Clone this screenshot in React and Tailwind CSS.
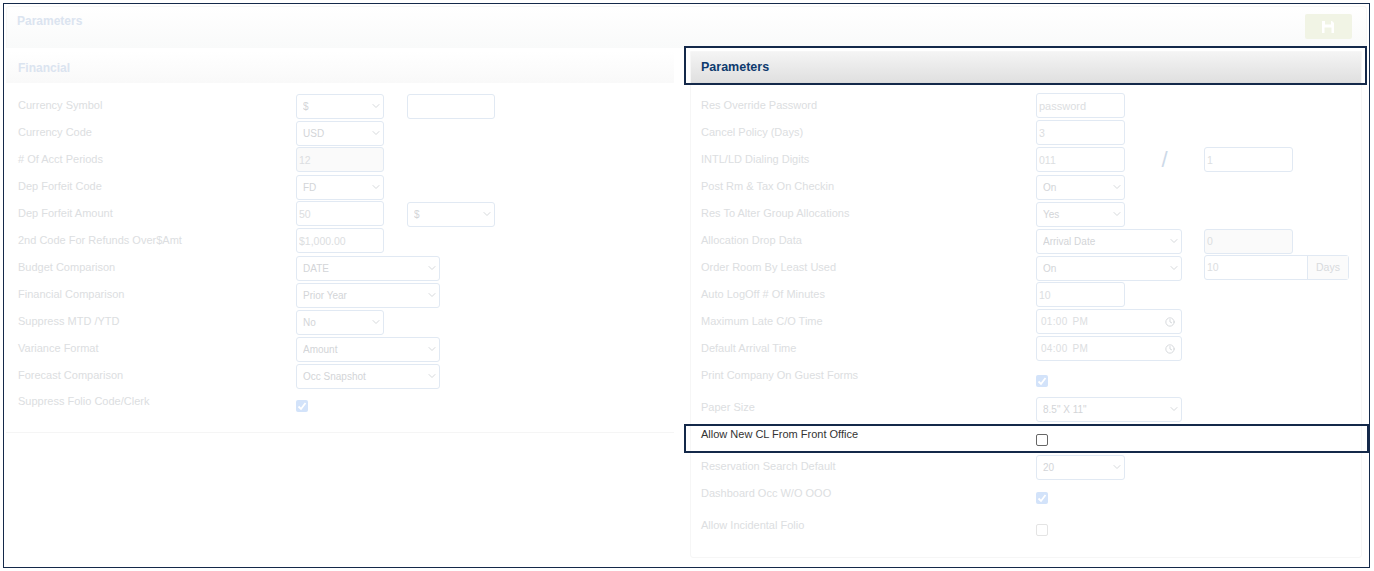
import React from 'react';
import { ChevronDown, Clock } from 'lucide-react';

const FONT = "font-['Liberation_Sans',Arial,sans-serif]";

function SelectBox({ value, width = 'w-[88px]' }) {
  return (
    <div className={`relative h-[25px] ${width}`}>
      <select
        defaultValue={value}
        className="h-full w-full appearance-none rounded-[3px] border border-[#e1e9f3] bg-white pl-[6px] text-[10px] text-[#d3d5d8] outline-none"
      >
        <option>{value}</option>
      </select>
      <ChevronDown className="pointer-events-none absolute right-[2px] top-[7px] h-[12px] w-[12px] text-[#cfd2d6]" strokeWidth={1.75} />
    </div>
  );
}

function TextBox({ value, width = 'w-[88px]', muted, placeholder }) {
  return (
    <input
      readOnly
      value={value || ''}
      placeholder={placeholder}
      className={`h-[25px] rounded-[3px] border border-[#e1e9f3] px-[2px] text-[10.5px] text-[#dcdee1] outline-none placeholder:text-[11px] placeholder:text-[#dcdee1] ${width} ${muted ? 'bg-[#fafafa]' : 'bg-white'}`}
    />
  );
}

function TimeBox({ value }) {
  return (
    <div className="flex h-[25px] w-[146px] items-center justify-between rounded-[3px] border border-[#e1e9f3] bg-white pl-[4px] pr-[6px] text-[10px] tracking-[0.3px] text-[#dcdee1] [word-spacing:2px]">
      <span>{value}</span>
      <Clock className="h-[10px] w-[10px] text-[#cfd2d6]" strokeWidth={2} />
    </div>
  );
}

function Check({ checked, faint }) {
  if (checked) {
    return (
      <span className="flex h-[12px] w-[12px] items-center justify-center rounded-[2px] bg-[#d3e3fa]">
        <svg viewBox="0 0 12 12" className="h-[12px] w-[12px]">
          <path d="M2.5 6.5 L5 9 L9.5 3" fill="none" stroke="#ffffff" strokeWidth="1.8" />
        </svg>
      </span>
    );
  }
  return (
    <span className={`block h-[12px] w-[12px] rounded-[2px] border bg-white ${faint ? 'border-[#e4e4e4]' : 'border-[#666666]'}`} />
  );
}

function Row({ label, dark, labelW, labelTop = 'pt-[6px]', h = 'h-[27px]', children, checkTop }) {
  return (
    <div className={`flex items-start ${h}`}>
      <div className={`text-[11px] leading-[13px] ${labelTop} ${labelW} ${dark ? 'text-[#333333]' : 'text-[#dcdee1]'}`}>
        {label}
      </div>
      <div className={`flex items-start ${checkTop || ''}`}>{children}</div>
    </div>
  );
}

function SaveIcon() {
  return (
    <svg viewBox="0 0 12 12" className="-ml-[2px] h-[12px] w-[12px]">
      <path d="M0 0 H3 V3.5 H9 V0 H10 L12 2 V12 H9.5 V6.5 H2.5 V12 H0 Z" fill="#ffffff" />
    </svg>
  );
}

const leftRows = [
  { label: 'Currency Symbol', node: <SelectBox value="$" />, second: <TextBox /> },
  { label: 'Currency Code', node: <SelectBox value="USD" /> },
  { label: '# Of Acct Periods', node: <TextBox value="12" muted /> },
  { label: 'Dep Forfeit Code', node: <SelectBox value="FD" /> },
  { label: 'Dep Forfeit Amount', node: <TextBox value="50" />, second: <SelectBox value="$" /> },
  { label: '2nd Code For Refunds Over$Amt', node: <TextBox value="$1,000.00" /> },
  { label: 'Budget Comparison', node: <SelectBox value="DATE" width="w-[144px]" /> },
  { label: 'Financial Comparison', node: <SelectBox value="Prior Year" width="w-[144px]" /> },
  { label: 'Suppress MTD /YTD', node: <SelectBox value="No" /> },
  { label: 'Variance Format', node: <SelectBox value="Amount" width="w-[144px]" /> },
  { label: 'Forecast Comparison', node: <SelectBox value="Occ Snapshot" width="w-[144px]" /> },
];

const NARROW = 'w-[89px]';
const WIDE = 'w-[146px]';

export default function App() {
  return (
    <div className={`h-[571px] w-[1374px] overflow-hidden bg-white p-[3px] ${FONT}`}>
      <div className="h-[565px] w-[1367px] border border-[#14294a] p-[2px]">
        <div className="flex h-[42px] items-start justify-between rounded-t-[3px] border border-b-0 border-[#f7f7f7] bg-gradient-to-b from-white to-[#f9fafa] pl-[10px] pr-[14px]">
          <h1 className="pt-[7px] text-[12px] font-bold leading-[14px] text-[#dbe4f0]">Parameters</h1>
          <button className="mt-[7px] flex h-[25px] w-[47px] items-center justify-center rounded-[2px] bg-[#f1f4e5]">
            <SaveIcon />
          </button>
        </div>

        <div className="mt-[3px] flex items-start">
          <section className="h-[382px] w-[668px] border-b border-[#f5f5f5]">
            <div className="flex h-[32px] items-center bg-gradient-to-b from-white to-[#f9f9f9] pl-[12px] pt-[2px] text-[12px] font-bold text-[#dbe4f0]">
              Financial
            </div>
            <div className="pl-[12px] pt-[10px]">
              {leftRows.map((row) => (
                <Row key={row.label} label={row.label} labelW="w-[278px]">
                  {row.node}
                  {row.second && <div className="ml-[23px]">{row.second}</div>}
                </Row>
              ))}
              <Row label="Suppress Folio Code/Clerk" labelTop="pt-[5px]" labelW="w-[278px]" checkTop="pt-[10px]">
                <Check checked />
              </Row>
            </div>
          </section>

          <section className="ml-[16px] h-[507px] w-[672px] rounded-b-[3px] border border-[#f6f6f6]">
            <div className="relative flex h-[31px] items-center border-b border-[#dcdcdc] bg-gradient-to-b from-[#f4f4f4] to-[#e0e0e0] pl-[10px] text-[12.5px] font-bold text-[#0e3a6e]">
              Parameters
              <div className="pointer-events-none absolute -left-[7px] -right-[6px] -top-[6px] -bottom-[3px] border-2 border-[#14294a]" />
            </div>
            <div className="pl-[10px] pt-[10px]">
              <Row label="Res Override Password" labelW="w-[335px]"><TextBox placeholder="password" width={NARROW} /></Row>
              <Row label="Cancel Policy (Days)" labelW="w-[335px]"><TextBox value="3" width={NARROW} /></Row>
              <Row label="INTL/LD Dialing Digits" labelW="w-[335px]">
                <TextBox value="011" width={NARROW} />
                <span className="flex h-[25px] w-[79px] items-center justify-center text-[22px] font-light text-[#cdd9e8]">/</span>
                <TextBox value="1" width={NARROW} />
              </Row>
              <Row label="Post Rm & Tax On Checkin" labelW="w-[335px]"><SelectBox value="On" width={NARROW} /></Row>
              <Row label="Res To Alter Group Allocations" labelW="w-[335px]"><SelectBox value="Yes" width={NARROW} /></Row>
              <Row label="Allocation Drop Data" labelW="w-[335px]">
                <SelectBox value="Arrival Date" width={WIDE} />
                <div className="ml-[22px]"><TextBox value="0" muted width={NARROW} /></div>
              </Row>
              <Row label="Order Room By Least Used" labelW="w-[335px]">
                <SelectBox value="On" width={WIDE} />
                <div className="ml-[22px] flex h-[25px] w-[145px] rounded-[3px] border border-[#e1e9f3] text-[10.5px] text-[#dcdee1]">
                  <span className="flex w-[102px] items-center pl-[2px]">10</span>
                  <span className="flex flex-1 items-center justify-center border-l border-[#e1e9f3] bg-[#fbfbfb] text-[#d8dadd]">Days</span>
                </div>
              </Row>
              <Row label="Auto LogOff # Of Minutes" labelW="w-[335px]"><TextBox value="10" width={NARROW} /></Row>
              <Row label="Maximum Late C/O Time" labelW="w-[335px]"><TimeBox value="01:00 PM" /></Row>
              <Row label="Default Arrival Time" labelW="w-[335px]"><TimeBox value="04:00 PM" /></Row>
              <Row label="Print Company On Guest Forms" labelW="w-[335px]" h="h-[32px]" checkTop="pt-[12px]"><Check checked /></Row>
              <Row label="Paper Size" labelW="w-[335px]" h="h-[33px]" checkTop="pt-[1px]"><SelectBox value={'8.5" X 11"'} width={WIDE} /></Row>
              <div className="relative">
                <Row label="Allow New CL From Front Office" dark labelTop="pt-0" labelW="w-[335px]" h="h-[26px]" checkTop="pt-[6px]"><Check /></Row>
                <div className="pointer-events-none absolute -left-[17px] -right-[8px] -top-[4px] bottom-[1px] border-2 border-[#14294a]" />
              </div>
              <Row label="Reservation Search Default" labelW="w-[335px]" h="h-[33px]"><SelectBox value="20" width={NARROW} /></Row>
              <Row label="Dashboard Occ W/O OOO" labelTop="pt-0" labelW="w-[335px]" h="h-[32px]" checkTop="pt-[5px]"><Check checked /></Row>
              <Row label="Allow Incidental Folio" labelTop="pt-0" labelW="w-[335px]" checkTop="pt-[5px]"><Check faint /></Row>
            </div>
          </section>
        </div>
      </div>
    </div>
  );
}
